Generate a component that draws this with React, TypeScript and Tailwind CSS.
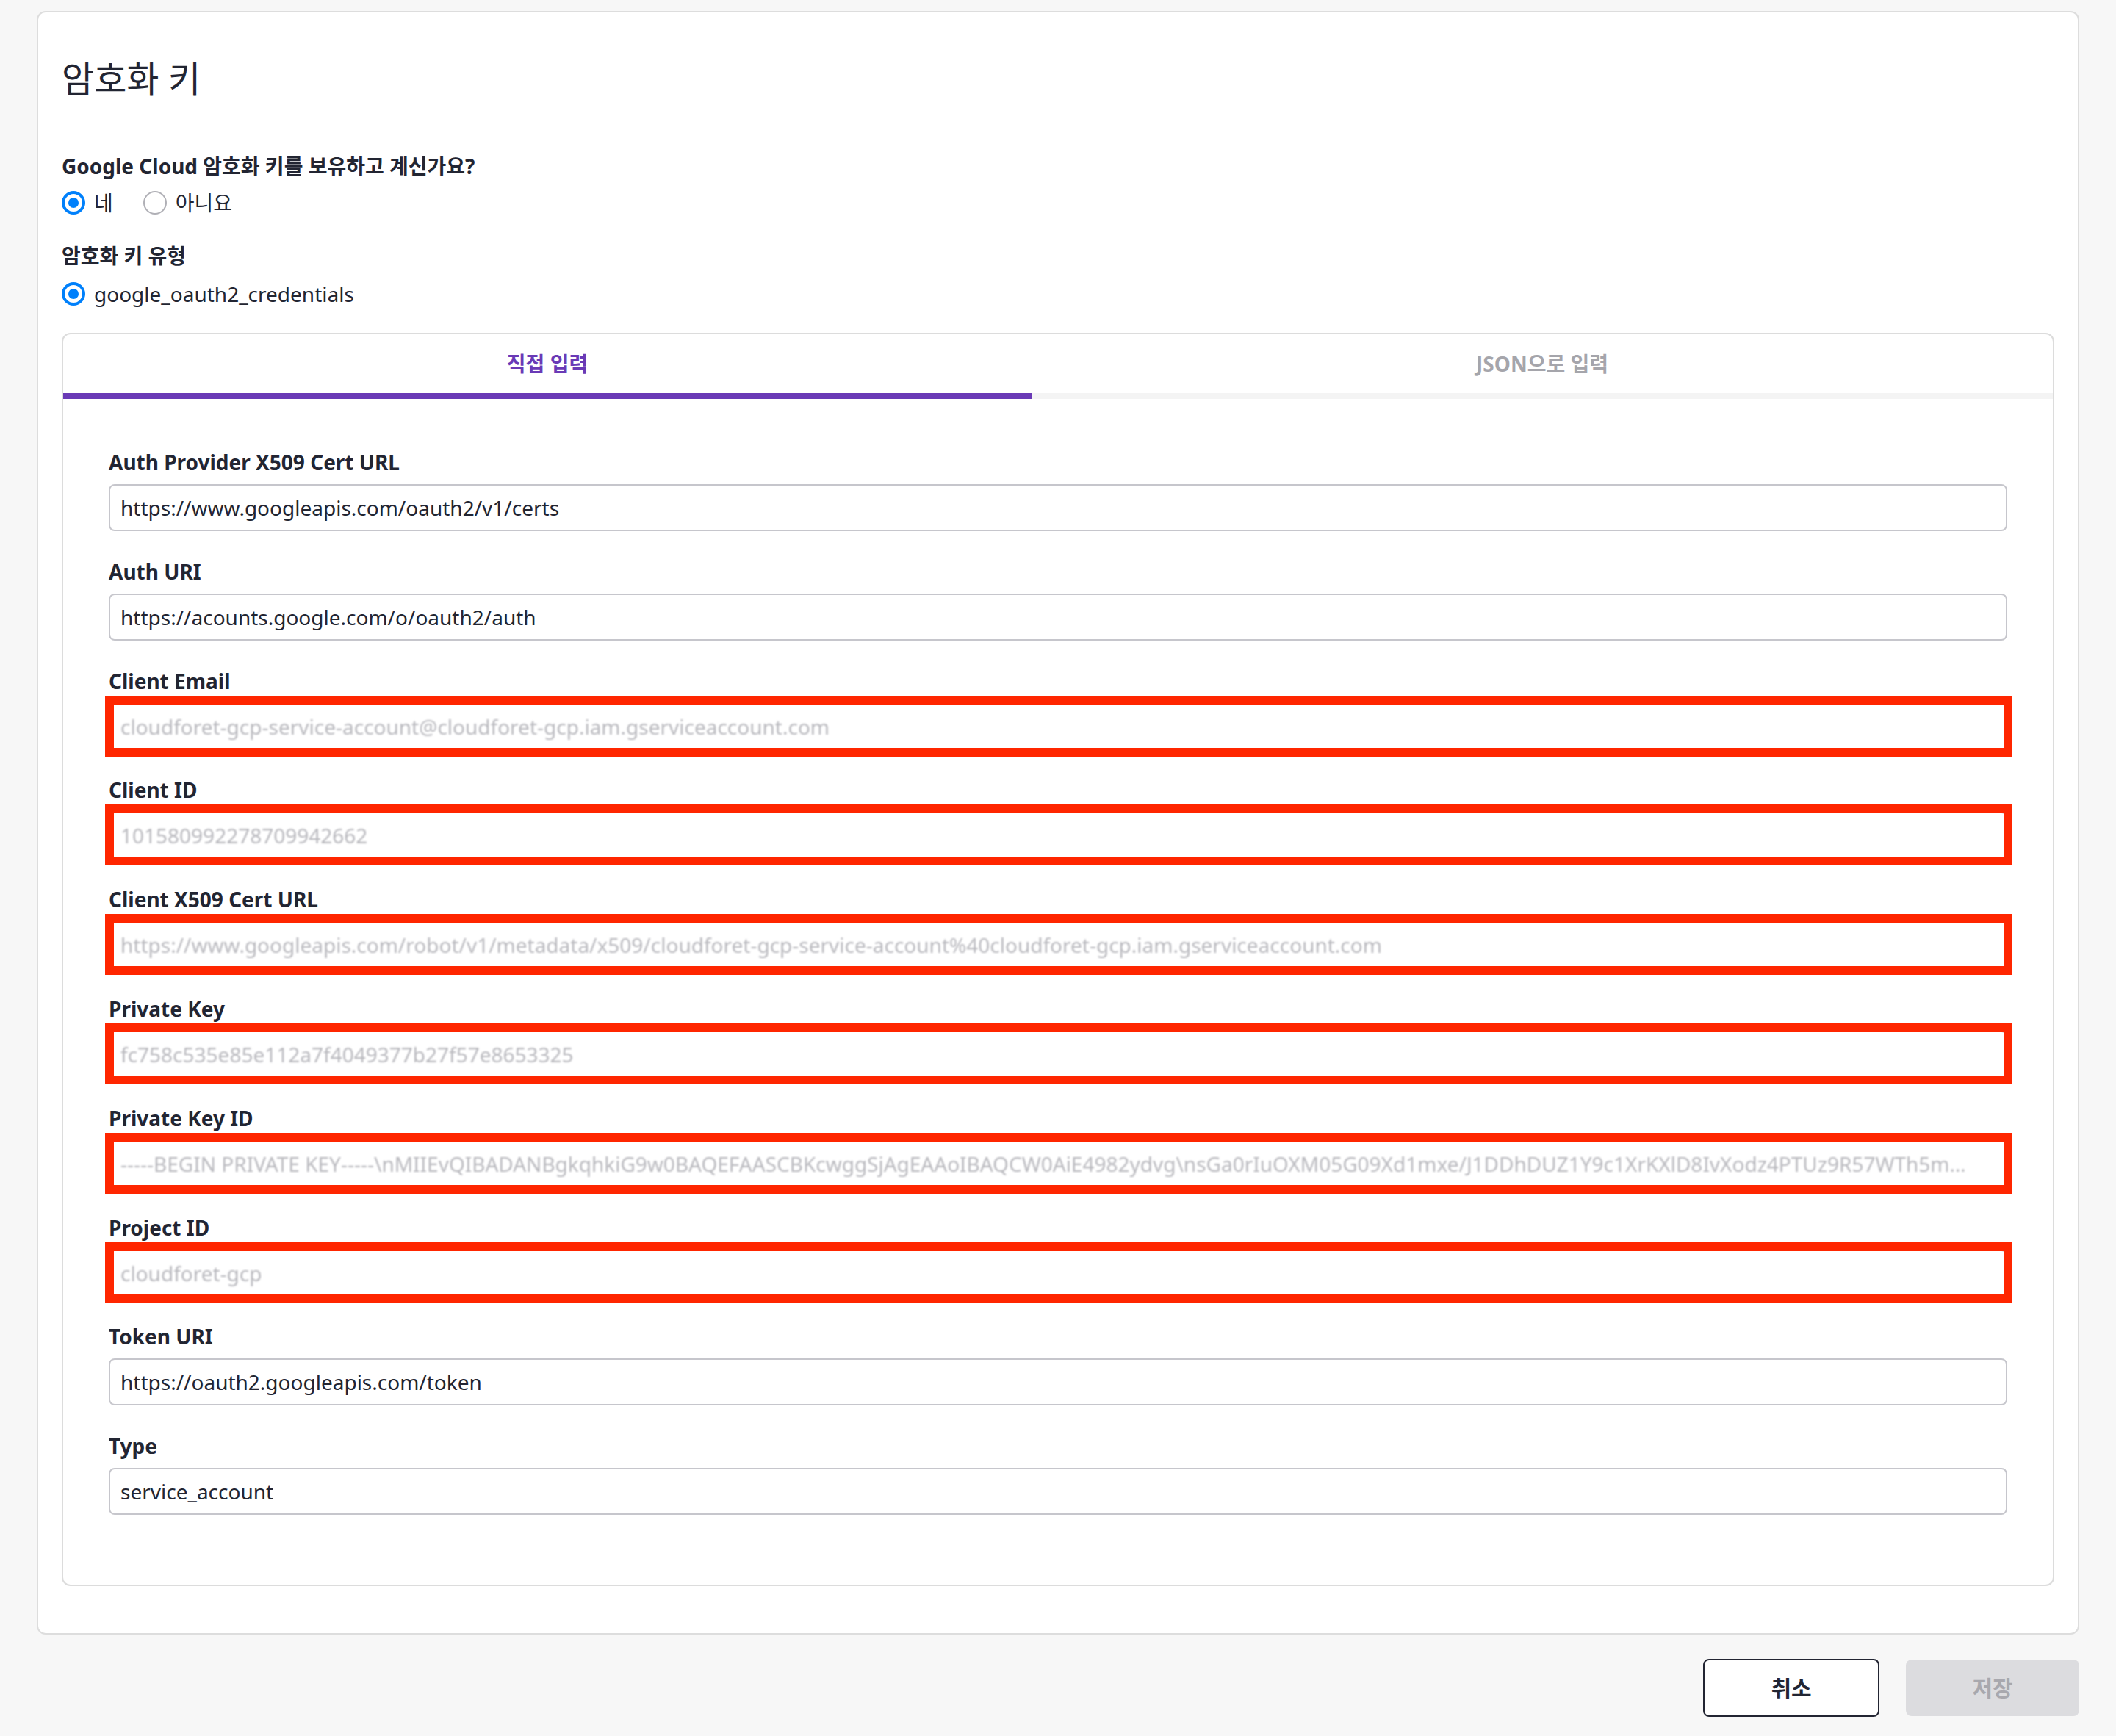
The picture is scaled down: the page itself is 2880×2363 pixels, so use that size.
import React from "react";

interface FieldProps {
  label: string;
  value: string;
  masked?: boolean;
}

const fields: FieldProps[] = [
  { label: "Auth Provider X509 Cert URL", value: "https://www.googleapis.com/oauth2/v1/certs" },
  { label: "Auth URI", value: "https://acounts.google.com/o/oauth2/auth" },
  {
    label: "Client Email",
    value: "cloudforet-gcp-service-account@cloudforet-gcp.iam.gserviceaccount.com",
    masked: true,
  },
  { label: "Client ID", value: "101580992278709942662", masked: true },
  {
    label: "Client X509 Cert URL",
    value:
      "https://www.googleapis.com/robot/v1/metadata/x509/cloudforet-gcp-service-account%40cloudforet-gcp.iam.gserviceaccount.com",
    masked: true,
  },
  { label: "Private Key", value: "fc758c535e85e112a7f4049377b27f57e8653325", masked: true },
  {
    label: "Private Key ID",
    value:
      "-----BEGIN PRIVATE KEY-----\\nMIIEvQIBADANBgkqhkiG9w0BAQEFAASCBKcwggSjAgEAAoIBAQCW0AiE4982ydvg\\nsGa0rIuOXM05G09Xd1mxe/J1DDhDUZ1Y9c1XrKXlD8IvXodz4PTUz9R57WTh5meQk2bN0aLxY7pW",
    masked: true,
  },
  { label: "Project ID", value: "cloudforet-gcp", masked: true },
  { label: "Token URI", value: "https://oauth2.googleapis.com/token" },
  { label: "Type", value: "service_account" },
];

function Radio({ checked, label }: { checked: boolean; label: string }) {
  return (
    <label className="flex items-center gap-[12px] h-[40px]">
      {checked ? (
        <span className="w-[32px] h-[32px] rounded-full border-[4px] border-[#0080fb] flex items-center justify-center">
          <span className="w-[14px] h-[14px] rounded-full bg-[#0080fb]" />
        </span>
      ) : (
        <span className="w-[32px] h-[32px] rounded-full border-2 border-[#b0b0b6]" />
      )}
      <span className="text-[28px] leading-[40px]">{label}</span>
    </label>
  );
}

function Field({ label, value, masked = false }: FieldProps) {
  return (
    <div className="flex flex-col">
      <p className="text-[28px] leading-[40px] font-bold mb-[10px]">{label}</p>
      <div className="relative">
        <div className="h-[64px] border-2 border-[#c6c6cc] rounded-[8px] bg-white pl-[14px] pr-[44px] flex items-center">
          <span
            className={
              masked
                ? "text-[28px] text-[#b9b9be] blur-[0.8px] truncate"
                : "text-[28px] text-[#222532] truncate"
            }
          >
            {value}
          </span>
        </div>
        {masked && (
          <div className="absolute -top-[10px] -bottom-[9px] -left-[5px] -right-[7px] border-[12px] border-[#ff2600] pointer-events-none" />
        )}
      </div>
    </div>
  );
}

export default function App() {
  return (
    <div className="min-h-[2363px] bg-[#f7f7f7] px-[50px] pt-[15px] font-['Noto_Sans','Noto_Sans_CJK_KR',sans-serif] text-[#222532]">
      <div className="bg-white border-2 border-[#dddddd] rounded-[12px] px-[32px] pt-[58px] pb-[64px]">
        <h1 className="text-[48px] leading-[64px] font-normal">암호화 키</h1>

        <p className="mt-[67px] text-[28px] leading-[40px] font-bold">
          Google Cloud 암호화 키를 보유하고 계신가요?
        </p>
        <div className="mt-[10px] flex items-center gap-[41px]">
          <Radio checked label="네" />
          <Radio checked={false} label="아니요" />
        </div>

        <p className="mt-[32px] text-[28px] leading-[40px] font-bold">암호화 키 유형</p>
        <div className="mt-[12px] flex">
          <Radio checked label="google_oauth2_credentials" />
        </div>

        <div className="mt-[33px] border-2 border-[#dcdcdc] rounded-[12px] overflow-hidden">
          <div className="flex">
            <div className="w-[1318px] flex flex-col">
              <div className="h-[80px] flex items-center justify-center text-[28px] font-bold text-[#6a3ab6]">
                직접 입력
              </div>
              <div className="h-[8px] bg-[#6a3ab6]" />
            </div>
            <div className="flex-1 flex flex-col">
              <div className="h-[80px] flex items-center justify-center text-[28px] font-bold text-[#a5a5ab]">
                JSON으로 입력
              </div>
              <div className="h-[8px] bg-[#f4f4f4]" />
            </div>
          </div>

          <div className="px-[62px] pt-[66px] pb-[95px] flex flex-col gap-[34.8px]">
            {fields.map((f) => (
              <Field key={f.label} {...f} />
            ))}
          </div>
        </div>
      </div>

      <div className="mt-[33px] flex justify-end items-center gap-[36px]">
        <button className="w-[240px] h-[79px] border-2 border-[#222532] rounded-[8px] bg-white text-[30px] font-bold text-[#222532]">
          취소
        </button>
        <button className="w-[236px] h-[77px] rounded-[8px] bg-[#dcdcdf] text-[30px] font-bold text-[#a8a8ae]">
          저장
        </button>
      </div>
    </div>
  );
}
